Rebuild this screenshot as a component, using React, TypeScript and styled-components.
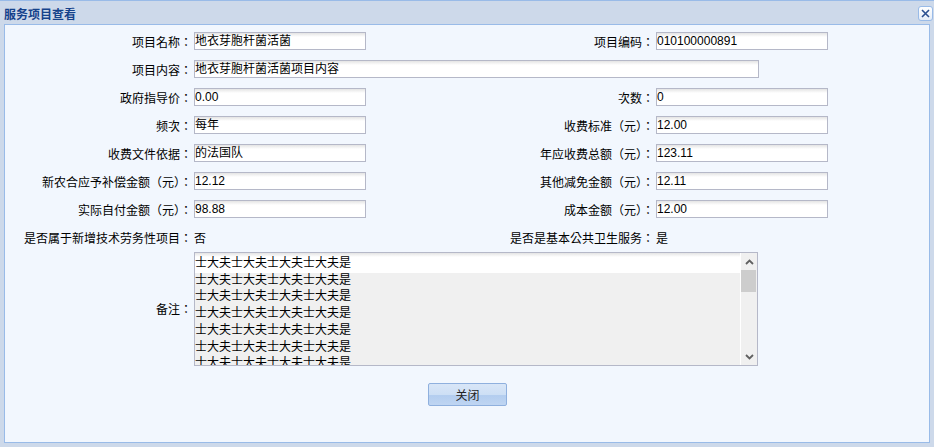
import React from 'react'
import styled, { createGlobalStyle } from 'styled-components'

const GlobalStyle = createGlobalStyle`
  html, body {
    margin: 0;
    padding: 0;
    background: #cdd9ea;
  }
  * {
    box-sizing: border-box;
  }
`

const Window = styled.div`
  width: 934px;
  height: 447px;
  background: #cdd9ea;
  border-top: 1px solid #99bbe8;
  padding: 0 4px 4px 4px;
  display: flex;
  flex-direction: column;
  font-family: "Liberation Sans", "Noto Sans CJK TC", sans-serif;
  font-size: 12px;
  color: #000;
`

const TitleBar = styled.div`
  height: 23px;
  display: flex;
  align-items: center;
  justify-content: space-between;
  margin-right: -3px;
`

const Title = styled.span`
  font-weight: bold;
  color: #15428b;
  font-size: 12px;
  margin-top: 1px;
`

const CloseButton = styled.div`
  width: 15px;
  height: 15px;
  border: 1px solid #99bbe8;
  border-radius: 3px;
  background: linear-gradient(#ffffff, #e4ecf7);
  display: flex;
  align-items: center;
  justify-content: center;
  margin-top: 2px;
`

const Panel = styled.div`
  flex: 1;
  background: #f2f7fe;
  border: 1px solid #99bbe8;
  padding-top: 2px;
  padding-left: 1px;
  display: flex;
  flex-direction: column;
`

const Form = styled.div`
  display: grid;
  grid-template-columns: 186px 172px 286px 172px;
  grid-template-rows: repeat(8, 28px) auto;
  column-gap: 2px;
  align-items: center;
`

const Label = styled.div`
  text-align: right;
  white-space: nowrap;
`

const Input = styled.div<{ $wide?: boolean }>`
  grid-column: ${p => (p.$wide ? '2 / span 3' : 'auto')};
  width: ${p => (p.$wide ? '565px' : '172px')};
  height: 18px;
  border: 1px solid #b5b8c8;
  background: linear-gradient(#e4e4e4 0px, #ffffff 4px, #ffffff 100%);
  padding-left: 0;
  line-height: 16px;
  white-space: nowrap;
  overflow: hidden;
`

const Value = styled.div`
  white-space: nowrap;
`

const MemoLabel = styled(Label)`
  align-self: center;
`

const MemoBox = styled.div`
  grid-column: 2 / span 3;
  width: 564px;
  height: 114px;
  margin-top: 1px;
  border: 1px solid #b5b8c8;
  display: flex;
  overflow: hidden;
`

const MemoText = styled.div`
  flex: 1;
  background: linear-gradient(#e4e4e4 0px, #ffffff 4px, #ffffff 20px, #f0f0f0 20px);
  padding: 2px 0 0 0;
  line-height: 16.7px;
  overflow: hidden;
  border-right: 1px solid #ffffff;
`

const ScrollBar = styled.div`
  width: 16px;
  background: #f0f0f0;
  display: flex;
  flex-direction: column;
  align-items: center;
`

const ScrollArrow = styled.div`
  height: 17px;
  width: 16px;
  display: flex;
  align-items: center;
  justify-content: center;
`

const ScrollTrack = styled.div`
  flex: 1;
  width: 16px;
`

const ScrollThumb = styled.div`
  width: 15px;
  height: 22px;
  background: #cdcdcd;
`

const Footer = styled.div`
  display: flex;
  justify-content: center;
  padding-top: 17px;
`

const Button = styled.div`
  width: 79px;
  height: 23px;
  border: 1px solid #8fb0de;
  border-radius: 2px;
  background: linear-gradient(#d9e6f7 0%, #cddff5 50%, #b3cdef 55%, #bfd5f2 100%);
  display: flex;
  align-items: center;
  justify-content: center;
  color: #222;
`

const fields: [string, string, string, string][] = [
  ['政府指导价：', '0.00', '次数：', '0'],
  ['频次：', '每年', '收费标准（元）：', '12.00'],
  ['收费文件依据：', '的法国队', '年应收费总额（元）：', '123.11'],
  ['新农合应予补偿金额（元）：', '12.12', '其他减免金额（元）：', '12.11'],
  ['实际自付金额（元）：', '98.88', '成本金额（元）：', '12.00'],
]

const memoLines = Array.from({ length: 7 }, () => '士大夫士大夫士大夫士大夫是')

export default function App() {
  return (
    <>
      <GlobalStyle />
      <Window>
        <TitleBar>
          <Title>服务项目查看</Title>
          <CloseButton>
            <svg width="11" height="11" viewBox="0 0 11 11">
              <path d="M2 2 L9 9 M9 2 L2 9" stroke="#2a4f8f" strokeWidth="1.6" />
            </svg>
          </CloseButton>
        </TitleBar>
        <Panel>
          <Form>
            <Label>项目名称：</Label>
            <Input>地衣芽胞杆菌活菌</Input>
            <Label>项目编码：</Label>
            <Input>010100000891</Input>

            <Label>项目内容：</Label>
            <Input $wide>地衣芽胞杆菌活菌项目内容</Input>

            {fields.map(([l1, v1, l2, v2]) => (
              <React.Fragment key={l1}>
                <Label>{l1}</Label>
                <Input>{v1}</Input>
                <Label>{l2}</Label>
                <Input>{v2}</Input>
              </React.Fragment>
            ))}

            <Label>是否属于新增技术劳务性项目：</Label>
            <Value>否</Value>
            <Label>是否是基本公共卫生服务：</Label>
            <Value>是</Value>

            <MemoLabel>备注：</MemoLabel>
            <MemoBox>
              <MemoText>
                {memoLines.map((t, i) => (
                  <div key={i}>{t}</div>
                ))}
              </MemoText>
              <ScrollBar>
                <ScrollArrow>
                  <svg width="9" height="6" viewBox="0 0 9 6">
                    <path d="M1 5 L4.5 1.5 L8 5" stroke="#606060" strokeWidth="1.8" fill="none" />
                  </svg>
                </ScrollArrow>
                <ScrollTrack>
                  <ScrollThumb />
                </ScrollTrack>
                <ScrollArrow>
                  <svg width="9" height="6" viewBox="0 0 9 6">
                    <path d="M1 1 L4.5 4.5 L8 1" stroke="#606060" strokeWidth="1.8" fill="none" />
                  </svg>
                </ScrollArrow>
              </ScrollBar>
            </MemoBox>
          </Form>
          <Footer>
            <Button>关闭</Button>
          </Footer>
        </Panel>
      </Window>
    </>
  )
}
